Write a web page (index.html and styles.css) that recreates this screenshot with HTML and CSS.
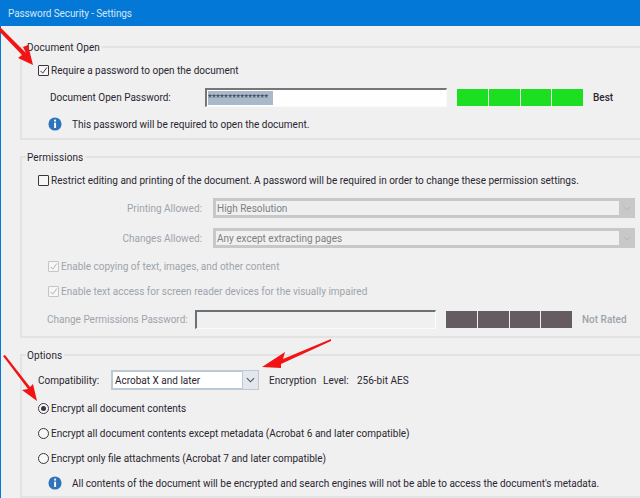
FILE: index.html
```html
<!DOCTYPE html>
<html lang="en">
<head>
    <meta charset="UTF-8">
    <meta name="viewport" content="width=device-width, initial-scale=1.0">
    <title>Password Security - Settings</title>
    <link rel="stylesheet" href="styles.css">
</head>
<body>
    <div class="title-bar">Password Security - Settings</div>
    <div class="content">
        <fieldset class="group group-open">
            <legend>Document Open</legend>
            <div class="row row-check">
                <span class="check"><svg viewBox="0 0 12 12"><path d="M2 6.5 L5 9.5 L10.5 2"/></svg></span>
                <span>Require a password to open the document</span>
            </div>
            <div class="row row-password">
                <span class="open-label">Document Open Password:</span>
                <span class="input input-open"><span class="selected">***************</span></span>
                <span class="meter meter-best"><i></i><i></i><i></i><i></i></span>
                <span class="rating">Best</span>
            </div>
            <div class="row row-info">
                <svg class="info" viewBox="0 0 16 16"><circle cx="8" cy="8" r="7.5"/><rect x="7" y="3" width="2.2" height="2.2"/><rect x="7" y="6.5" width="2.2" height="6"/></svg>
                <span>This password will be required to open the document.</span>
            </div>
        </fieldset>

        <fieldset class="group group-permissions">
            <legend>Permissions</legend>
            <div class="row row-check">
                <span class="check"></span>
                <span>Restrict editing and printing of the document. A password will be required in order to change these permission settings.</span>
            </div>
            <div class="row row-select disabled">
                <span class="select-label">Printing Allowed:</span>
                <span class="select select-off">High Resolution<svg class="chevron" viewBox="0 0 10 6"><path d="M1 1 L5 5 L9 1"/></svg></span>
            </div>
            <div class="row row-select disabled">
                <span class="select-label">Changes Allowed:</span>
                <span class="select select-off">Any except extracting pages<svg class="chevron" viewBox="0 0 10 6"><path d="M1 1 L5 5 L9 1"/></svg></span>
            </div>
            <div class="row row-sub disabled">
                <span class="check check-off"><svg viewBox="0 0 12 12"><path d="M2 6.5 L5 9.5 L10.5 2"/></svg></span>
                <span>Enable copying of text, images, and other content</span>
            </div>
            <div class="row row-sub disabled">
                <span class="check check-off"><svg viewBox="0 0 12 12"><path d="M2 6.5 L5 9.5 L10.5 2"/></svg></span>
                <span>Enable text access for screen reader devices for the visually impaired</span>
            </div>
            <div class="row row-change disabled">
                <span class="change-label">Change Permissions Password:</span>
                <span class="input input-change"></span>
                <span class="meter meter-none"><i></i><i></i><i></i><i></i></span>
                <span class="rating">Not Rated</span>
            </div>
        </fieldset>

        <fieldset class="group group-options">
            <legend>Options</legend>
            <div class="row row-compat">
                <span class="compat-label">Compatibility:</span>
                <span class="select select-on">Acrobat X and later<span class="drop"><svg class="chevron" viewBox="0 0 10 6"><path d="M1 1 L5 5 L9 1"/></svg></span></span>
                <span class="enc-label">Encryption</span>
                <span class="enc-level">Level:</span>
                <span>256-bit AES</span>
            </div>
            <div class="row row-radio"><span class="radio radio-on"></span><span>Encrypt all document contents</span></div>
            <div class="row row-radio"><span class="radio"></span><span>Encrypt all document contents except metadata (Acrobat 6 and later compatible)</span></div>
            <div class="row row-radio"><span class="radio"></span><span>Encrypt only file attachments (Acrobat 7 and later compatible)</span></div>
            <div class="row row-info row-info-last">
                <svg class="info" viewBox="0 0 16 16"><circle cx="8" cy="8" r="7.5"/><rect x="7" y="3" width="2.2" height="2.2"/><rect x="7" y="6.5" width="2.2" height="6"/></svg>
                <span>All contents of the document will be encrypted and search engines will not be able to access the document's metadata.</span>
            </div>
        </fieldset>
    </div>

    <!-- red arrows drawn on top of the dialog -->
    <svg class="arrows" viewBox="0 0 640 498">
        <path d="M0 27 L26 53 L23 47 L28 45 L33 65 L18 58 L22 55 L-1 31 Z"/>
        <path d="M331 339 L283 359 L285 352 L262 367 L281 368 L281 364 L331 341 Z"/>
        <path d="M3 356 L28 389 L22 390 L37 401 L33 384 L30 387 L5 355 Z"/>
    </svg>
</body>
</html>
```
FILE: styles.css
```css
* {
    box-sizing: border-box;
}
body {
    margin: 0;
    width: 640px;
    height: 498px;
    overflow: hidden;
    background-color: #f0f0f0;
    border-left: 1px solid #0378d7;
    font-family: Roboto, Arial, sans-serif;
    font-size: 10px;
    color: #2a2630;
}
.title-bar {
    height: 26px;
    margin-left: -1px;
    padding: 6px 0 0 8px;
    background-color: #0378d7;
    color: #d5e6f5;
    line-height: 15px;
    letter-spacing: -0.1px;
}
.content {
    padding: 12px 0 0 19px;
}
.group {
    margin: 0 0 8px;
    padding: 0 0 0 16px;
    border: 2px solid #e3e3e3;
    border-right: none;
}
.group legend {
    margin-left: -12px;
    padding: 2px 2px 0 1px;
    line-height: 16px;
    letter-spacing: 0.1px;
}
.group-open {
    height: 102px;
}
.group-permissions {
    height: 190px;
}
.group-options {
    height: 152px;
}
.row {
    display: flex;
    align-items: center;
    height: 20px;
}
.row-check {
    margin-top: 4px;
}
.row-password {
    margin: 7px 0 0 12px;
}
.row-info {
    margin: 7px 0 0 10px;
}
.row-select {
    margin-top: 8px;
}
.row-select + .row-select {
    margin-top: 10px;
}
.row-sub {
    margin: 8px 0 0 10px;
}
.row-sub + .row-sub {
    margin-top: 5px;
}
.row-change {
    margin: 8px 0 0 9px;
}
.row-compat {
    margin-top: 6px;
}
.row-radio {
    margin-top: 5px;
}
.row-compat + .row-radio {
    margin-top: 8px;
}
.row-info-last {
    margin-top: 5px;
}
.disabled {
    color: #9ea4ab;
}
.check {
    display: flex;
    flex: none;
    width: 11px;
    height: 11px;
    margin-right: 2px;
    background-color: #f6f6f6;
    border: 1px solid #3a3640;
    border-radius: 1px;
}
.check svg {
    width: 9px;
    height: 9px;
    fill: none;
    stroke: #3a3640;
    stroke-width: 1.3;
}
.check-off {
    border-color: #c4c4c4;
}
.check-off svg {
    stroke: #b0b0b0;
}
.radio {
    position: relative;
    flex: none;
    width: 11px;
    height: 11px;
    margin-right: 2px;
    background-color: #f8f8f8;
    border: 1px solid #3a3640;
    border-radius: 50%;
}
.radio-on::after {
    content: "";
    position: absolute;
    left: 2px;
    top: 2px;
    width: 5px;
    height: 5px;
    border-radius: 50%;
    background-color: #3a3640;
}
.open-label {
    width: 155px;
}
.input {
    display: flex;
    align-items: center;
    flex: none;
    height: 19px;
    border: 1px solid #fbfbfb;
    border-top: 2px solid #77757a;
    border-left: 2px solid #77757a;
}
.input-open {
    width: 242px;
    padding-left: 1px;
    background-color: #fefefe;
}
.selected {
    width: 65px;
    height: 14px;
    overflow: hidden;
    background-color: #a9b9c9;
    color: #33415a;
    font-size: 9px;
    line-height: 15px;
    letter-spacing: 0.15px;
}
.meter {
    display: flex;
    flex: none;
    gap: 1px;
    width: 126px;
    height: 17px;
    margin-left: 10px;
}
.meter i {
    flex: 1;
}
.meter-best i {
    background-color: #1ddf22;
}
.meter-none i {
    background-color: #675b62;
}
.rating {
    margin-left: 10px;
    font-weight: 500;
}
.select-label {
    width: 164px;
    text-align: right;
}
.select {
    display: flex;
    align-items: center;
    position: relative;
    flex: none;
}
.select-off {
    width: 422px;
    height: 20px;
    margin-left: 11px;
    padding-left: 1px;
    border: 3px solid #c8c8c8;
    border-right: none;
    color: #7d8084;
}
.select-off .chevron {
    position: absolute;
    right: 0;
    box-sizing: content-box;
    width: 8px;
    height: 5px;
    padding: 6px 4px;
    background-color: #c8c8c8;
    stroke: #a9b8c4;
}
.chevron {
    fill: none;
    stroke: #44505c;
    stroke-width: 1.2;
}
.change-label {
    width: 148px;
}
.input-change {
    width: 241px;
    border-top-color: #6c7176;
    border-left-color: #6c7176;
}
.compat-label {
    width: 73px;
    color: #2a2630;
}
.select-on {
    width: 148px;
    height: 20px;
    padding-left: 2px;
    background-color: #fff;
    border: 2px solid #bccad6;
}
.drop {
    position: absolute;
    right: -2px;
    top: -2px;
    display: flex;
    align-items: center;
    justify-content: center;
    width: 17px;
    height: 20px;
    background-color: #e3e7eb;
    border: 1px solid #bccad6;
}
.drop .chevron {
    width: 9px;
    height: 6px;
}
.enc-label {
    width: 54px;
    margin-left: 10px;
}
.enc-level {
    width: 34px;
}
.info {
    flex: none;
    width: 14px;
    height: 14px;
    margin-right: 10px;
}
.info circle {
    fill: #2d74bd;
}
.info rect {
    fill: #fff;
}
.arrows {
    position: absolute;
    left: 0;
    top: 0;
    width: 640px;
    height: 498px;
    fill: #f21414;
}
```
